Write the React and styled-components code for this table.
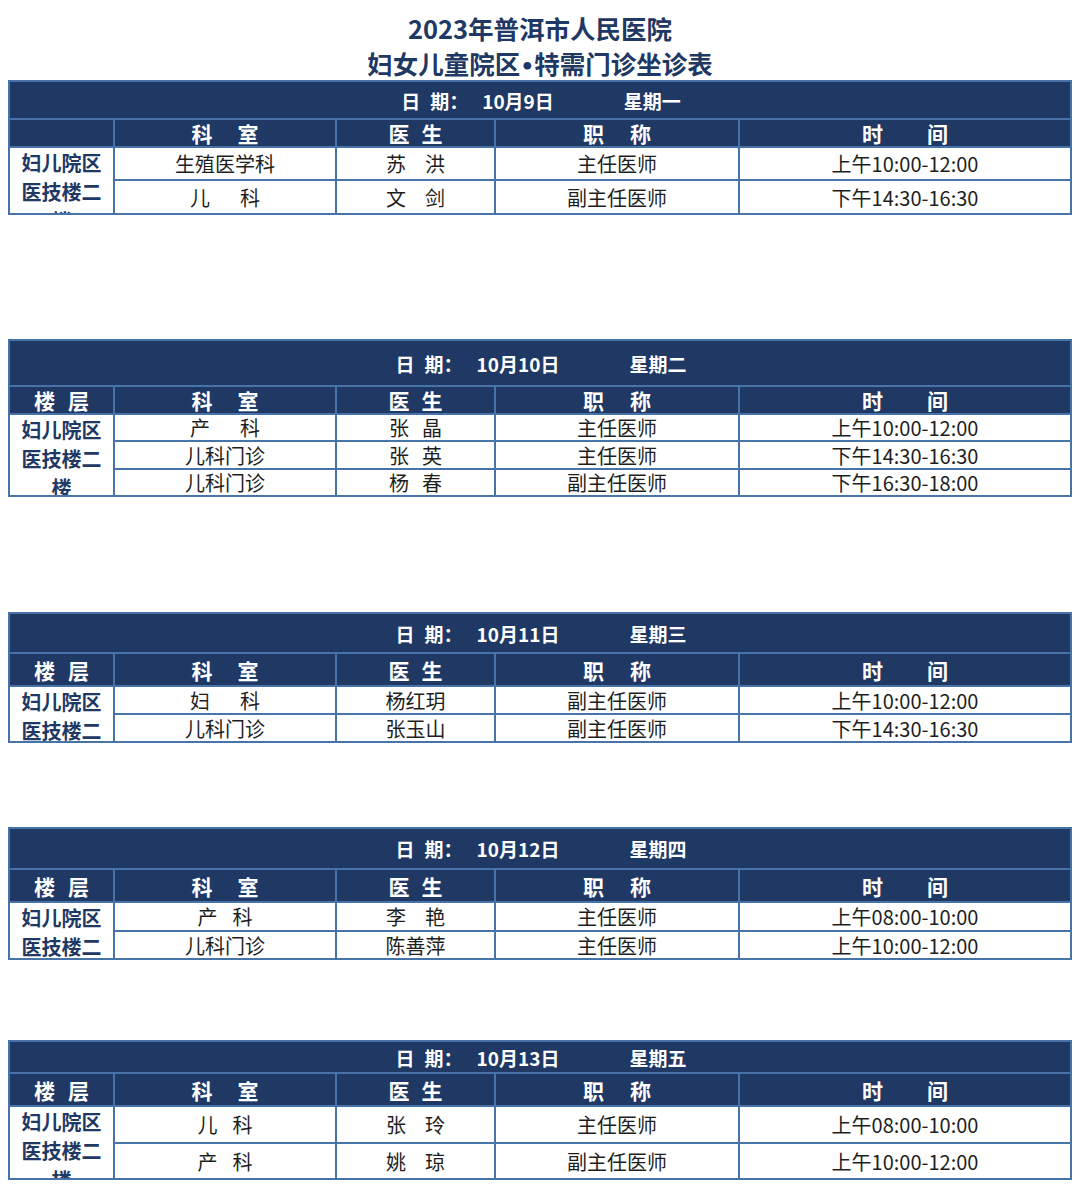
import styled, { createGlobalStyle } from "styled-components";

const NAVY = "#1f3864";
const LINE = "#4673a8";
const FONT = `"Noto Sans CJK SC", "Noto Sans", sans-serif`;

const HEADS = [
  { text: "科室", gap: 25 },
  { text: "医生", gap: 12 },
  { text: "职称", gap: 26 },
  { text: "时间", gap: 44 },
];

const FLOOR = "妇儿院区医技楼二楼";

const DAYS = [
  {
    date: "10月9日",
    week: "星期一",
    space: 0,
    floorHead: false,
    rows: [36, 26, 31, 32],
    list: [
      { dept: "生殖医学科", dg: 0, doc: "苏洪", cg: 19, title: "主任医师", time: "上午10:00-12:00" },
      { dept: "儿科", dg: 30, doc: "文剑", cg: 19, title: "副主任医师", time: "下午14:30-16:30" },
    ],
  },
  {
    date: "10月10日",
    week: "星期二",
    space: 124,
    floorHead: true,
    rows: [44, 26, 25, 26, 25],
    list: [
      { dept: "产科", dg: 30, doc: "张晶", cg: 13, title: "主任医师", time: "上午10:00-12:00" },
      { dept: "儿科门诊", dg: 0, doc: "张英", cg: 13, title: "主任医师", time: "下午14:30-16:30" },
      { dept: "儿科门诊", dg: 0, doc: "杨春", cg: 13, title: "副主任医师", time: "下午16:30-18:00" },
    ],
  },
  {
    date: "10月11日",
    week: "星期三",
    space: 115,
    floorHead: true,
    rows: [38, 31, 26, 26],
    list: [
      { dept: "妇科", dg: 30, doc: "杨红玥", cg: 0, title: "副主任医师", time: "上午10:00-12:00" },
      { dept: "儿科门诊", dg: 0, doc: "张玉山", cg: 0, title: "副主任医师", time: "下午14:30-16:30" },
    ],
  },
  {
    date: "10月12日",
    week: "星期四",
    space: 84,
    floorHead: true,
    rows: [39, 31, 27, 26],
    list: [
      { dept: "产科", dg: 15, doc: "李艳", cg: 19, title: "主任医师", time: "上午08:00-10:00" },
      { dept: "儿科门诊", dg: 0, doc: "陈善萍", cg: 0, title: "主任医师", time: "上午10:00-12:00" },
    ],
  },
  {
    date: "10月13日",
    week: "星期五",
    space: 80,
    floorHead: true,
    rows: [30, 31, 35, 34],
    list: [
      { dept: "儿科", dg: 15, doc: "张玲", cg: 19, title: "主任医师", time: "上午08:00-10:00" },
      { dept: "产科", dg: 15, doc: "姚琼", cg: 19, title: "副主任医师", time: "上午10:00-12:00" },
    ],
  },
];

// split into single chars when the cell spreads them apart
const spread = (text, gap) =>
  gap ? text.split("").map((c, i) => <span key={i}>{c}</span>) : text;

function DayTable({ day }) {
  return (
    <Table $space={day.space} $rows={day.rows}>
      <DateBar>
        <DateLabel>
          <span>日</span>
          <span>期：</span>
        </DateLabel>
        <span>{day.date}</span>
        <Week>{day.week}</Week>
      </DateBar>
      <HeadCell $gap={13}>{day.floorHead && spread("楼层", 13)}</HeadCell>
      {HEADS.map((h) => (
        <HeadCell key={h.text} $gap={h.gap}>
          {spread(h.text, h.gap)}
        </HeadCell>
      ))}
      <FloorCell $span={day.list.length}>{FLOOR}</FloorCell>
      {day.list.map((r, i) => [
        <Cell key={`d${i}`} $gap={r.dg}>{spread(r.dept, r.dg)}</Cell>,
        <Cell key={`c${i}`} $gap={r.cg}>{spread(r.doc, r.cg)}</Cell>,
        <Cell key={`t${i}`}>{r.title}</Cell>,
        <Cell key={`m${i}`}>{r.time}</Cell>,
      ])}
    </Table>
  );
}

export default function App() {
  return (
    <>
      <GlobalStyle />
      <Sheet>
        <Title>
          <TitleLine>2023年普洱市人民医院</TitleLine>
          <TitleLine>
            妇女儿童院区<Dot>•</Dot>特需门诊坐诊表
          </TitleLine>
        </Title>
        {DAYS.map((d) => (
          <DayTable key={d.date} day={d} />
        ))}
      </Sheet>
    </>
  );
}

const GlobalStyle = createGlobalStyle`
  body {
    margin: 8px;
    background: #fff;
    font-family: ${FONT};
  }
`;

const Sheet = styled.div`
  width: 1064px;
  box-shadow: 0 0 0 1px #e6e6e6;
  padding-bottom: 6px;
`;

const Title = styled.div`
  padding-top: 2px;
  text-align: center;
  color: ${NAVY};
  font-size: 25.5px;
  font-weight: 700;
`;

const TitleLine = styled.div`
  height: 35px;
  line-height: 35px;
`;

const Dot = styled.span`
  font-family: "DejaVu Sans", sans-serif;
  font-size: 22px;
  line-height: 0;
`;

const Table = styled.div`
  margin-top: ${(p) => p.$space}px;
  display: grid;
  grid-template-columns: 103px 220px 157px 242px 330px;
  grid-template-rows: ${(p) => p.$rows.map((h) => `${h}px`).join(" ")};
  gap: 2px;
  padding: 2px;
  background: ${LINE};
`;

const DateBar = styled.div`
  grid-column: 1 / -1;
  background: ${NAVY};
  color: #fff;
  font-size: 19px;
  font-weight: 700;
  display: flex;
  align-items: center;
  justify-content: center;
  gap: 14px;
  padding-left: 2px;
`;

const DateLabel = styled.span`
  display: flex;
  gap: 10px;
`;

const Week = styled.span`
  margin-left: 56px;
`;

const HeadCell = styled.div`
  background: ${NAVY};
  color: #fff;
  font-size: 21px;
  font-weight: 700;
  display: flex;
  align-items: center;
  justify-content: center;
  gap: ${(p) => p.$gap || 0}px;
`;

const Cell = styled.div`
  background: #fff;
  color: #1e1e1e;
  font-size: 20px;
  display: flex;
  align-items: center;
  justify-content: center;
  gap: ${(p) => p.$gap || 0}px;
  white-space: nowrap;
`;

const FloorCell = styled.div`
  grid-row: span ${(p) => p.$span};
  background: #fff;
  color: ${NAVY};
  font-size: 20px;
  font-weight: 700;
  line-height: 29px;
  text-align: center;
  padding: 0 10px;
  overflow: hidden;
`;
